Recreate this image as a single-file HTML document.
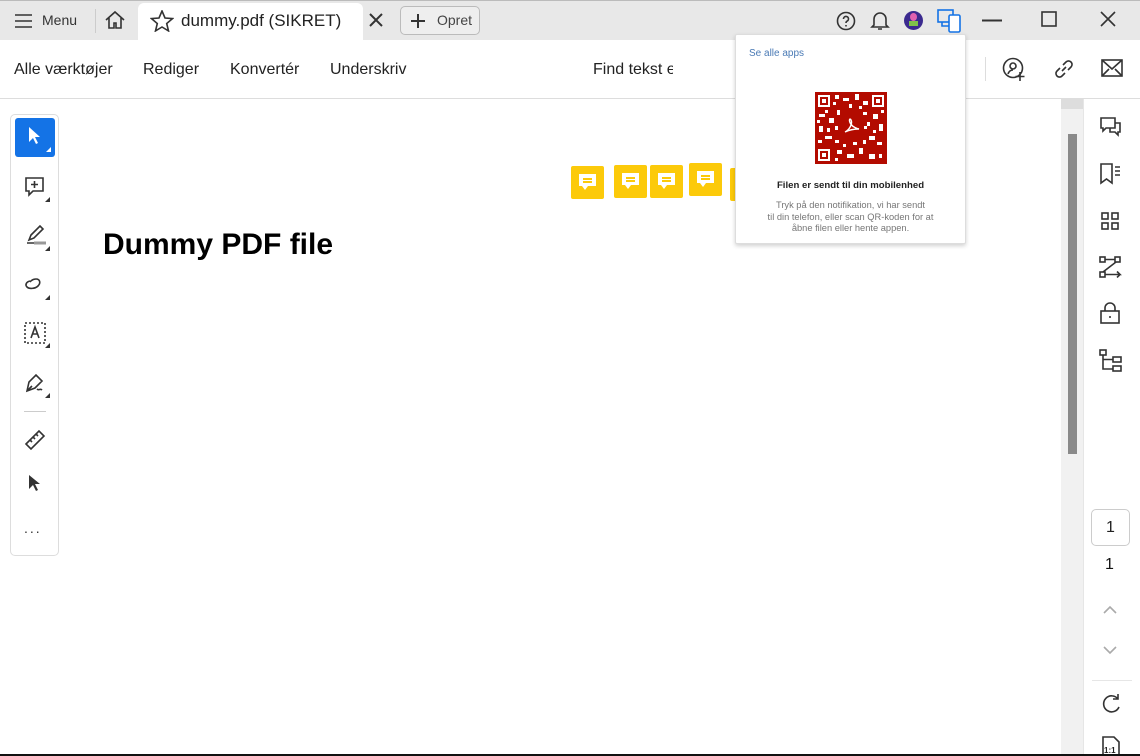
<!DOCTYPE html>
<html><head><meta charset="utf-8"><style>
*{margin:0;padding:0;box-sizing:border-box}
body{width:1140px;height:756px;overflow:hidden;background:#fff;font-family:"Liberation Sans",Arial,sans-serif;position:relative;color:#222}
.a{position:absolute}
svg{position:absolute;fill:none;stroke:#333;stroke-width:1.6}
.nt{width:33px;height:33px;background:#fcca0a;border-radius:2px}
.nt i{position:absolute;left:8px;top:8px;width:17px;height:12px;background:#fff}
.nt i:before,.nt i:after{content:"";position:absolute;left:4px;width:9px;height:1.5px;background:#fcca0a;top:4px}
.nt i:after{top:7px}
.nt b{position:absolute;left:11px;top:20px;border-left:3px solid transparent;border-right:3px solid transparent;border-top:4px solid #fff}
.tri{position:absolute;width:0;height:0;border-left:5px solid transparent;border-bottom:5px solid #333}
</style></head><body>
<div class="a" style="left:0;top:0;width:1140px;height:40px;background:#e8e8e8;border-top:1px solid #bbb"></div>
<div class="a" style="left:138px;top:3px;width:225px;height:37px;background:#fff;border-radius:6px 6px 0 0"></div>
<svg style="left:14px;top:12px" width="20" height="18"><path d="M1 3h17M1 9h17M1 15h17"/></svg>
<div class="a" style="left:42px;top:12px;font-size:14px;color:#333">Menu</div>
<div class="a" style="left:95px;top:9px;width:1px;height:24px;background:#ccc"></div>
<svg style="left:104px;top:10px" width="22" height="20"><path d="M2 10L11 2l9 8M5 8v10h5v-5h2v5h5V8"/></svg>
<svg style="left:150px;top:10px" width="24" height="22"><path d="M12 1l3 7 7.5.6-5.8 4.9 1.8 7.4L12 17l-6.5 3.9 1.8-7.4L1.5 8.6 9 8z"/></svg>
<div class="a" style="left:181px;top:11px;font-size:17px;color:#222">dummy.pdf (SIKRET)</div>
<svg style="left:369px;top:13px" width="14" height="14"><path d="M1 1l12 12M13 1L1 13" stroke-width="2"/></svg>
<div class="a" style="left:400px;top:6px;width:80px;height:29px;border:1px solid #bbb;border-radius:5px;background:#eee"></div>
<svg style="left:410px;top:13px" width="16" height="16"><path d="M8 1v14M1 8h14" stroke-width="2"/></svg>
<div class="a" style="left:437px;top:12px;font-size:14px;color:#444">Opret</div>
<svg style="left:836px;top:11px" width="20" height="20"><circle cx="10" cy="10" r="8.5"/><path d="M7.5 8a2.5 2.5 0 1 1 3.5 2.2c-.8.4-1 .9-1 1.8M10 14v1.5"/></svg>
<svg style="left:870px;top:10px" width="20" height="22"><path d="M4 15V9a6 6 0 0 1 12 0v6l2 2H2zM8 19h4"/></svg>
<div class="a" style="left:904px;top:11px;width:19px;height:19px;border-radius:50%;background:#3b2a8f"></div>
<div class="a" style="left:910px;top:13px;width:7px;height:8px;border-radius:50%;background:#e060b0"></div>
<div class="a" style="left:909px;top:21px;width:9px;height:5px;background:#7fc24a"></div>
<svg style="left:937px;top:9px;stroke:#1473e6" width="28" height="24"><rect x="1" y="1" width="15" height="12"/><rect x="12" y="6" width="11" height="17" rx="1.5" fill="#fff"/><path d="M5 13v4h7"/></svg>
<svg style="left:982px;top:19px" width="20" height="3"><path d="M0 1.5h20" stroke-width="2"/></svg>
<svg style="left:1041px;top:11px" width="16" height="16"><rect x="1" y="1" width="14" height="14"/></svg>
<svg style="left:1100px;top:11px" width="16" height="16"><path d="M1 1l14 14M15 1L1 15"/></svg>
<div class="a" style="left:0;top:98px;width:1140px;height:1px;background:#ddd"></div>
<div class="a" style="left:14px;top:61px;font-size:16px;color:#222">Alle værktøjer</div>
<div class="a" style="left:143px;top:61px;font-size:16px">Rediger</div>
<div class="a" style="left:230px;top:61px;font-size:16px">Konvertér</div>
<div class="a" style="left:330px;top:61px;font-size:16px">Underskriv</div>
<div class="a" style="left:593px;top:61px;font-size:16px;width:80px;overflow:hidden;white-space:nowrap">Find tekst eller</div>
<div class="a" style="left:985px;top:57px;width:1px;height:24px;background:#ddd"></div>
<svg style="left:1002px;top:57px" width="26" height="26"><circle cx="11" cy="11" r="9.5"/><circle cx="11" cy="9" r="3"/><path d="M6 17c1-3 3-4 5-4M18 15v9M13.5 19.5h9"/></svg>
<svg style="left:1053px;top:58px" width="22" height="22"><path d="M9 13l4-4M7 10l-3 3a3 3 0 0 0 5 5l3-3M15 12l3-3a3 3 0 0 0-5-5l-3 3"/></svg>
<svg style="left:1101px;top:59px" width="22" height="18"><rect x="1" y="1" width="20" height="16"/><path d="M1 1l10 9 10-9M1 17l7-7M21 17l-7-7"/></svg>
<div class="a" style="left:10px;top:114px;width:49px;height:442px;border:1px solid #ddd;border-radius:5px"></div>
<div class="a" style="left:15px;top:118px;width:40px;height:39px;background:#1473e6;border-radius:3px"></div>
<svg style="left:28px;top:126px;fill:#fff;stroke:none" width="14" height="20"><path d="M1 1v15l4-4 3 6 2-1-3-6h5z"/></svg>
<div class="tri" style="left:46px;top:147px;border-bottom-color:#fff"></div>
<svg style="left:24px;top:176px" width="22" height="22"><path d="M2 2h17v13H9l-4 4v-4H2zM10.5 5v7M7 8.5h7"/></svg><div class="tri" style="left:45px;top:197px"></div>
<svg style="left:24px;top:224px" width="24" height="22"><path d="M5 16l2-5 9-9 3 3-9 9zM3 19h18" /><path d="M10 19h12" stroke="#999" stroke-width="3"/></svg><div class="tri" style="left:45px;top:246px"></div>
<svg style="left:24px;top:276px" width="22" height="18"><path d="M6 5C2 6 1 9 3 11s8 2 11-1 2-7-2-7-6 3-6 3"/></svg><div class="tri" style="left:45px;top:295px"></div>
<svg style="left:24px;top:322px" width="22" height="22"><rect x="1" y="1" width="20" height="20" stroke-dasharray="2 2"/><path d="M7 16l4-11 4 11M8.5 12h5"/></svg><div class="tri" style="left:45px;top:343px"></div>
<svg style="left:24px;top:372px" width="22" height="22"><path d="M3 19l2-9 7-7 6 6-7 7zM3 19l5-5M13 17c2 2 3-1 5 1"/></svg><div class="tri" style="left:45px;top:393px"></div>
<div class="a" style="left:24px;top:411px;width:22px;height:1px;background:#ccc"></div>
<svg style="left:24px;top:429px" width="22" height="22"><path d="M2 15L15 2l5 5L7 20zM6 11l2 2M9 8l2 2M12 5l2 2"/></svg>
<svg style="left:28px;top:474px;fill:#333;stroke:none" width="14" height="20"><path d="M1 1v14l4-4 3 6 2-1-3-6h5z"/></svg>
<div class="a" style="left:24px;top:520px;font-size:14px;color:#333;letter-spacing:2px">...</div>
<div class="a" style="left:103px;top:228px;font-size:30px;font-weight:bold;color:#000">Dummy PDF file</div>
<div class="a nt" style="left:571px;top:166px"><i></i><b></b></div>
<div class="a nt" style="left:614px;top:165px"><i></i><b></b></div>
<div class="a nt" style="left:650px;top:165px"><i></i><b></b></div>
<div class="a nt" style="left:689px;top:163px"><i></i><b></b></div>
<div class="a nt" style="left:730px;top:168px;width:8px"></div>
<div class="a" style="left:1061px;top:99px;width:22px;height:657px;background:#f1f1f1"></div>
<div class="a" style="left:1061px;top:99px;width:22px;height:10px;background:#ddd"></div>
<div class="a" style="left:1068px;top:134px;width:9px;height:320px;background:#8a8a8a"></div>
<div class="a" style="left:1083px;top:99px;width:1px;height:657px;background:#e6e6e6"></div>
<svg style="left:1099px;top:116px" width="24" height="24"><path d="M2 2h14v10H7l-3 3v-3H2zM16 7h5v9h-2v3l-3-3h-5v-4"/></svg>
<svg style="left:1099px;top:162px" width="24" height="24"><path d="M2 2h11v19l-5.5-4L2 21zM16 5h5M16 9h5M16 13h5"/></svg>
<svg style="left:1101px;top:212px" width="18" height="18"><rect x="1" y="1" width="6" height="6"/><rect x="11" y="1" width="6" height="6"/><rect x="1" y="11" width="6" height="6"/><rect x="11" y="11" width="6" height="6"/></svg>
<svg style="left:1099px;top:256px" width="24" height="22"><rect x="1" y="1" width="5" height="5"/><rect x="16" y="1" width="5" height="5"/><rect x="1" y="16" width="5" height="5"/><path d="M6 3.5h10M4 16L17 6M6 18.5h15l-3-3M21 18.5l-3 3"/></svg>
<svg style="left:1100px;top:302px" width="20" height="22"><rect x="1" y="9" width="18" height="12"/><path d="M5 9V6a5 5 0 0 1 10 0v3M10 14v2"/></svg>
<svg style="left:1099px;top:349px" width="24" height="24"><rect x="1" y="1" width="6" height="5"/><rect x="14" y="8" width="8" height="5"/><rect x="14" y="17" width="8" height="5"/><path d="M4 6v14h10M4 10.5h10"/></svg>
<div class="a" style="left:1091px;top:509px;width:39px;height:37px;border:1px solid #ccc;border-radius:5px;text-align:center;line-height:35px;font-size:16px">1</div>
<div class="a" style="left:1105px;top:556px;font-size:16px;color:#111">1</div>
<svg style="left:1103px;top:605px;stroke:#aaa" width="14" height="10"><path d="M1 8l6-6 6 6"/></svg>
<svg style="left:1103px;top:645px;stroke:#aaa" width="14" height="10"><path d="M1 2l6 6 6-6"/></svg>
<div class="a" style="left:1092px;top:680px;width:40px;height:1px;background:#e6e6e6"></div>
<svg style="left:1100px;top:693px" width="22" height="22"><path d="M18 6A8 8 0 1 0 19 14M18 1v5h-5"/></svg>
<svg style="left:1101px;top:736px" width="20" height="20"><path d="M2 1h11l5 5v14H2z"/></svg>
<div class="a" style="left:1104px;top:746px;font-size:8px;font-weight:bold">1:1</div>
<div class="a" style="left:0;top:754px;width:1140px;height:2px;background:#111"></div>
<div class="a" style="left:735px;top:34px;width:231px;height:210px;background:#fff;border:1px solid #ddd;box-shadow:0 2px 4px rgba(0,0,0,.18);border-radius:2px"></div>
<div class="a" style="left:749px;top:48px;font-size:10px;color:#4a7ab5">Se alle apps</div>
<svg style="left:815px;top:92px;stroke:none" width="72" height="72">
<rect x="0" y="0" width="72" height="72" fill="#b30b00"/>
<g fill="#fff">
<rect x="3" y="3" width="12" height="12"/><rect x="57" y="3" width="12" height="12"/><rect x="3" y="57" width="12" height="12"/>
<rect x="20" y="3" width="4" height="4"/><rect x="28" y="6" width="6" height="3"/><rect x="40" y="2" width="4" height="6"/><rect x="48" y="9" width="5" height="4"/><rect x="18" y="10" width="3" height="3"/><rect x="34" y="12" width="3" height="4"/><rect x="44" y="14" width="3" height="3"/>
<rect x="4" y="22" width="6" height="3"/><rect x="14" y="26" width="5" height="5"/><rect x="4" y="34" width="4" height="6"/><rect x="10" y="44" width="7" height="3"/><rect x="10" y="18" width="3" height="3"/><rect x="2" y="28" width="3" height="3"/><rect x="12" y="36" width="3" height="4"/><rect x="3" y="48" width="4" height="3"/>
<rect x="58" y="22" width="5" height="5"/><rect x="64" y="32" width="4" height="7"/><rect x="54" y="44" width="6" height="4"/><rect x="62" y="50" width="5" height="3"/><rect x="52" y="30" width="3" height="4"/><rect x="66" y="18" width="3" height="3"/><rect x="58" y="38" width="3" height="3"/>
<rect x="22" y="58" width="5" height="4"/><rect x="32" y="62" width="7" height="4"/><rect x="44" y="56" width="4" height="6"/><rect x="54" y="62" width="6" height="5"/><rect x="28" y="52" width="3" height="3"/><rect x="38" y="50" width="4" height="3"/><rect x="64" y="62" width="3" height="4"/><rect x="20" y="66" width="3" height="3"/>
<rect x="22" y="18" width="3" height="5"/><rect x="48" y="20" width="4" height="3"/><rect x="20" y="48" width="4" height="3"/><rect x="48" y="48" width="3" height="4"/><rect x="20" y="34" width="3" height="4"/><rect x="49" y="34" width="3" height="3"/>
</g>
<g fill="#b30b00"><rect x="5" y="5" width="8" height="8"/><rect x="59" y="5" width="8" height="8"/><rect x="5" y="59" width="8" height="8"/></g>
<g fill="#fff"><rect x="7" y="7" width="4" height="4"/><rect x="61" y="7" width="4" height="4"/><rect x="7" y="61" width="4" height="4"/></g>
<rect x="25" y="24" width="22" height="22" fill="#b30b00"/>
<path d="M30 40c4-2 8-8 6-12s-4 6 8 9c-4 0-10 1-14 3z" stroke="#fff" stroke-width="1.4" fill="none"/>
</svg>
<div class="a" style="left:736px;top:180px;width:229px;text-align:center;font-size:9.6px;font-weight:bold;color:#222">Filen er sendt til din mobilenhed</div>
<div class="a" style="left:736px;top:200px;width:229px;text-align:center;font-size:9.3px;color:#777;line-height:11.5px">Tryk på den notifikation, vi har sendt<br>til din telefon, eller scan QR-koden for at<br>åbne filen eller hente appen.</div>
</body></html>
